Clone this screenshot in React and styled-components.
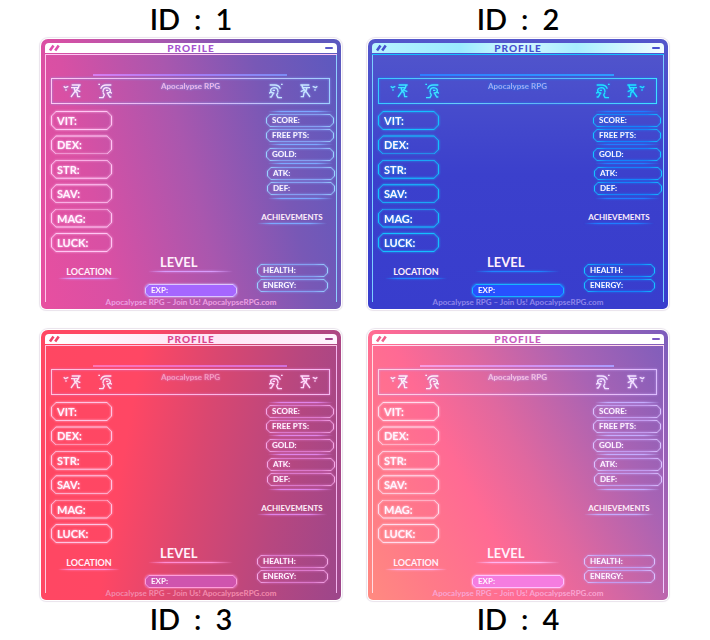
import React from "react";
import styled, { createGlobalStyle, ThemeProvider } from "styled-components";

const Global = createGlobalStyle`
  * { box-sizing: border-box; margin: 0; }
  body { background: #fff; font-family: Lato, "Open Sans", sans-serif; }
`;

const themes = [
  {
    id: 1,
    bg: "linear-gradient(76deg, #e84fa0 0%, #d850a4 22%, #a957ae 50%, #7858b6 75%, #5a59c0 100%)",
    header: "#ffffff",
    title: "#a653cf",
    slash: "#e04fae",
    dash: "#5a59c9",
    frame: "linear-gradient(90deg, #ffc9f2, #e3b4f5 50%, #9fd0ff)",
    sideL: "#ffc4ea",
    sideR: "#8fd0ff",
    accent: "linear-gradient(90deg, #d77df0, #a57bf5 50%, #7c8cf5)",
    stat: "#ffc6f3",
    mini: "#9bd3ff",
    miniDim: "#85a0f2",
    rule: "#d79cfc",
    ruleR: "#7ca8ff",
    exp: "#a566ff",
    expLine: "#dcc6ff",
    iconL: "#ffe3fa",
    iconR: "#c9e6ff",
    soft: "#f0b4e6",
    foot: "#eba0e2",
  },
  {
    id: 2,
    bg: "linear-gradient(180deg, #5356cb 0%, #4a4fcc 18%, #3b40cc 50%, #383dcd 100%)",
    header: "linear-gradient(90deg, #b9f3ff, #9aecff 30%, #d5f8ff 50%, #a8efff 70%, #f2fdff)",
    title: "#4650cf",
    slash: "#4650cf",
    dash: "#4650cf",
    frame: "linear-gradient(90deg, #38c8ff, #6ccbf8 30%, #5fb4f5 60%, #3fe0ff)",
    sideL: "#7ccfff",
    sideR: "#7ccfff",
    accent: "linear-gradient(90deg, #2f7dff, #2f8cff 50%, #2f9cff)",
    stat: "#14bfff",
    mini: "#16c4ff",
    miniDim: "#1483fa",
    rule: "#1f86ff",
    ruleR: "#1f7dff",
    exp: "#2750ff",
    expLine: "#17b4ff",
    iconL: "#3fe4ff",
    iconR: "#22e2ff",
    soft: "#a7a7ee",
    foot: "#8d86ea",
  },
  {
    id: 3,
    bg: "linear-gradient(100deg, #ff4762 0%, #ff4764 30%, #da4770 52%, #b8477f 76%, #9c468b 100%)",
    header: "linear-gradient(90deg, #ffffff, #ffe3f6 50%, #fff4fd)",
    title: "#d8448c",
    slash: "#f04468",
    dash: "#a0428c",
    frame: "linear-gradient(90deg, #ffc3dc, #ffb6e2 50%, #f5b9f0)",
    sideL: "#ffc9dc",
    sideR: "#f3b4ee",
    accent: "linear-gradient(90deg, #ff74b4, #ee6cc8 50%, #d070dc)",
    stat: "#ffc4e2",
    mini: "#f6aae6",
    miniDim: "#dc78cc",
    rule: "#ff8cd4",
    ruleR: "#e084ea",
    exp: "#cf54ae",
    expLine: "#ff9edb",
    iconL: "#ffe3ee",
    iconR: "#ffdcfa",
    soft: "#f59cbc",
    foot: "#f28aac",
  },
  {
    id: 4,
    bg: "linear-gradient(62deg, #ff8a80 0%, #ff7a88 16%, #ff6a94 36%, #e0689f 52%, #a863b4 76%, #7c5dbc 100%)",
    header: "#ffffff",
    title: "#c95cc0",
    slash: "#f0628c",
    dash: "#7b58c4",
    frame: "linear-gradient(90deg, #ffd0e2, #ffc0ec 50%, #dcbcff)",
    sideL: "#ffdce4",
    sideR: "#f0ccff",
    accent: "linear-gradient(90deg, #f99ce0, #d990f0 50%, #a99cff)",
    stat: "#ffdcec",
    mini: "#dcc4ff",
    miniDim: "#c39cf0",
    rule: "#ffb4f0",
    ruleR: "#c4acff",
    exp: "#f57ce0",
    expLine: "#ffc4ff",
    iconL: "#fff0f6",
    iconR: "#f2e2ff",
    soft: "#f5c0de",
    foot: "#f9a4d2",
  },
];

const Page = styled.main`
  display: grid;
  grid-template-columns: 1fr 1fr;
  column-gap: 27px;
  row-gap: 21px;
  padding: 0 42px 0 41px;
`;

const Entry = styled.section`
  display: flex;
  flex-direction: ${(p) => (p.$below ? "column-reverse" : "column")};
`;

const Heading = styled.h2`
  display: flex;
  justify-content: center;
  gap: 14px;
  height: 39px;
  font-size: 29px;
  line-height: 37px;
  font-weight: 600;
  color: #000;
`;

const Window = styled.article`
  display: flex;
  flex-direction: column;
  min-height: 270px;
  padding: 4px 4px 2px;
  border-radius: 7px 7px 5px 5px;
  background: ${(p) => p.theme.bg};
  box-shadow: 0 0 0 1px #ffffff, 0 0 1px 2px #e9e3ec;
`;

const TitleBar = styled.header`
  display: grid;
  grid-template-columns: 1fr auto 1fr;
  align-items: center;
  height: 10px;
  padding: 0 4px;
  border-radius: 4px 4px 0 0;
  background: ${(p) => p.theme.header};
`;

const Title = styled.h3`
  font-size: 10px;
  line-height: 10px;
  font-weight: 900;
  letter-spacing: 1px;
  color: ${(p) => p.theme.title};
`;

const Slashes = styled.svg`
  width: 11px;
  height: 6px;
  overflow: visible;
  stroke: ${(p) => p.theme.slash};
  stroke-width: 2.6;
`;

const Minimize = styled.button`
  justify-self: end;
  display: flex;
  align-items: center;
  width: 8px;
  height: 10px;
  padding: 0;
  border: 0;
  background: none;
  &::before {
    content: "";
    flex: 1;
    height: 2px;
    border-radius: 1px;
    background: ${(p) => p.theme.dash};
  }
`;

const Body = styled.div`
  flex: 1;
  display: flex;
  flex-direction: column;
  margin-top: 1px;
  padding: 0 2px 0 5px;
  border-top: 1px solid ${(p) => p.theme.stat};
  background:
    linear-gradient(${(p) => p.theme.sideL}, ${(p) => p.theme.sideL}) left top / 1px calc(100% - 5px) no-repeat,
    linear-gradient(${(p) => p.theme.sideR}, ${(p) => p.theme.sideR}) right top / 1px calc(100% - 5px) no-repeat;
`;

const Accent = styled.hr`
  width: 68%;
  height: 2px;
  margin: 19px 0 2px 15%;
  border: 0;
  background: ${(p) => p.theme.accent};
`;

const Banner = styled.div`
  display: grid;
  grid-template-columns: 1fr auto 1fr;
  height: 26px;
  margin: 0 5px 0 1px;
  padding: 0 11px;
  border: 1px solid;
  border-image: ${(p) => p.theme.frame} 1;
  filter: drop-shadow(0 0 1px ${(p) => p.theme.miniDim});
`;

const BannerText = styled.p`
  font-size: 8px;
  line-height: 14px;
  font-weight: 700;
  color: ${(p) => p.theme.soft};
`;

const Figures = styled.div`
  display: flex;
  align-items: center;
  gap: 17px;
  justify-content: ${(p) => (p.$mirror ? "flex-end" : "flex-start")};
  color: ${(p) => (p.$mirror ? p.theme.iconR : p.theme.iconL)};
`;

const Glyph = styled.svg`
  width: ${(p) => p.$width}px;
  height: 16px;
  fill: none;
  stroke: currentColor;
  stroke-width: 4;
  stroke-linejoin: round;
`;

const Columns = styled.div`
  flex: 1;
  display: grid;
  grid-template-columns: 70px 1fr 78px;
  column-gap: 20px;
`;

const LeftColumn = styled.div`
  display: flex;
  flex-direction: column;
  padding: 7px 0 0 1px;
`;

const Stats = styled.ul`
  display: flex;
  flex-direction: column;
  justify-content: space-between;
  height: 141px;
  padding: 0;
  list-style: none;
`;

const octagon = (cut) => `polygon(evenodd,
  ${cut}px 0, calc(100% - ${cut}px) 0, 100% ${cut}px, 100% calc(100% - ${cut}px),
  calc(100% - ${cut}px) 100%, ${cut}px 100%, 0 calc(100% - ${cut}px), 0 ${cut}px, ${cut}px 0,
  ${cut}px 1px, 1px ${cut}px, 1px calc(100% - ${cut}px), ${cut}px calc(100% - 1px),
  calc(100% - ${cut}px) calc(100% - 1px), calc(100% - 1px) calc(100% - ${cut}px),
  calc(100% - 1px) ${cut}px, calc(100% - ${cut}px) 1px, ${cut}px 1px)`;

const Plate = styled.li`
  position: relative;
  display: block;
  color: #fff4fd;
  font-weight: 700;
  filter: drop-shadow(0 0 1px ${(p) => p.$glow});
  &::before {
    content: "";
    position: absolute;
    inset: 0;
    background: ${(p) => p.$line};
    clip-path: ${(p) => octagon(p.$cut)};
  }
`;

const StatPlate = styled(Plate).attrs((p) => ({ $line: p.theme.stat, $glow: p.theme.stat, $cut: 5 }))`
  width: 61px;
  height: 19px;
  padding-left: 6px;
  font-size: 11px;
  line-height: 19px;
`;

const SmallPlate = styled(Plate).attrs((p) => ({
  $line: `linear-gradient(90deg, ${p.theme.mini}, ${p.theme.miniDim} 20%, ${p.theme.miniDim} 80%, ${p.theme.mini})`,
  $glow: p.theme.miniDim,
  $cut: 4,
}))`
  height: 13px;
  padding-left: 6px;
  font-size: 8px;
  line-height: 13px;
`;

const ExpPlate = styled(Plate).attrs((p) => ({ as: "div", $line: p.theme.expLine, $glow: p.theme.expLine, $cut: 4 }))`
  width: 92px;
  height: 13px;
  padding-left: 6px;
  font-size: 8px;
  line-height: 13px;
  border-radius: 5px;
  background: ${(p) => p.theme.exp};
`;

const Rule = styled.hr`
  align-self: stretch;
  height: 1px;
  border: 0;
  background: linear-gradient(90deg, transparent, ${(p) => p.$color} 20%, ${(p) => p.$color} 75%, transparent);
  filter: drop-shadow(0 0 1px ${(p) => p.$color});
`;

const Caption = styled.h4`
  display: flex;
  flex-direction: column;
  align-items: center;
  font-size: 9px;
  line-height: 12px;
  font-weight: 700;
  color: #fff0fb;
`;

const Location = styled(Caption)`
  width: 62px;
  margin: 14px 0 0 7px;
`;

const MiddleColumn = styled.div`
  display: flex;
  flex-direction: column;
  justify-content: flex-end;
  align-items: flex-end;
  gap: 12px;
`;

const Level = styled(Caption)`
  width: 85px;
  margin-right: 4px;
  font-size: 13px;
  line-height: 18px;
`;

const LevelText = styled.span`
  align-self: flex-start;
  padding-left: 12px;
`;

const RightColumn = styled.div`
  display: flex;
  flex-direction: column;
  padding-top: 7px;
`;

const PlateGroup = styled.ul`
  display: flex;
  flex-direction: column;
  gap: 2px;
  padding: 0;
  margin: ${(p) => p.$margin};
  list-style: none;
`;

const GroupRule = styled(Rule)`
  margin: 0 2px 0 11px;
`;

const Achievements = styled(Caption)`
  width: 70px;
  margin-top: 12px;
  font-size: 8px;
`;

const Footer = styled.footer`
  height: 10px;
  padding-right: 3px;
  text-align: center;
  font-size: 8px;
  line-height: 10px;
  font-weight: 700;
  color: ${(p) => p.theme.foot};
`;

const SiteLink = styled.a`
  color: inherit;
  text-decoration: none;
`;

function Runner({ mirror }) {
  return (
    <Glyph $width={18} viewBox="0 0 54 48" aria-hidden="true">
      <g transform={mirror ? "matrix(-1 0 0 1 54 0)" : undefined}>
        <path d="M2 10 L7 14 L16 10 M7 21 H11" />
        <path d="M26 6 H53 M24 14 H48 M48 8 Q47 18 36 25 L24 42 M34 15 Q33 23 42 29 L44 41 H52 M43 22 L52 26" />
      </g>
    </Glyph>
  );
}

function Thrower({ mirror }) {
  return (
    <Glyph $width={14} viewBox="0 0 42 48" aria-hidden="true">
      <g transform={mirror ? "matrix(-1 0 0 1 42 0)" : undefined}>
        <path d="M1 4 H6 M8 17 Q13 6 24 6 H40 M15 27 Q15 14 26 14 Q38 15 37 24 Q35 31 26 30 M24 22 H31 M15 28 L19 36 L15 44 H3 M29 31 L35 42 H40 M36 27 L42 31" />
      </g>
    </Glyph>
  );
}

function Profile({ theme }) {
  return (
    <ThemeProvider theme={theme}>
      <Window>
        <TitleBar>
          <Slashes viewBox="0 0 11 6" aria-hidden="true">
            <path d="M1 5.5 L4.5 .5 M6.2 5.5 L9.7 .5" />
          </Slashes>
          <Title>PROFILE</Title>
          <Minimize aria-label="Minimize" />
        </TitleBar>
        <Body>
          <Accent />
          <Banner>
            <Figures>
              <Runner />
              <Thrower />
            </Figures>
            <BannerText>Apocalypse RPG</BannerText>
            <Figures $mirror>
              <Thrower mirror />
              <Runner mirror />
            </Figures>
          </Banner>
          <Columns>
            <LeftColumn>
              <Stats>
                {["VIT:", "DEX:", "STR:", "SAV:", "MAG:", "LUCK:"].map((s) => (
                  <StatPlate key={s}>{s}</StatPlate>
                ))}
              </Stats>
              <Location>
                LOCATION
                <Rule $color={theme.rule} />
              </Location>
            </LeftColumn>
            <MiddleColumn>
              <Level>
                <LevelText>LEVEL</LevelText>
                <Rule $color={theme.rule} />
              </Level>
              <ExpPlate>EXP:</ExpPlate>
            </MiddleColumn>
            <RightColumn>
              <GroupRule $color={theme.ruleR} />
              <PlateGroup $margin="2px 1px 2px 9px">
                <SmallPlate>SCORE:</SmallPlate>
                <SmallPlate>FREE PTS:</SmallPlate>
              </PlateGroup>
              <GroupRule $color={theme.ruleR} />
              <PlateGroup $margin="3px 1px 2px 9px">
                <SmallPlate>GOLD:</SmallPlate>
              </PlateGroup>
              <GroupRule $color={theme.ruleR} />
              <PlateGroup $margin="3px 0 3px 10px">
                <SmallPlate>ATK:</SmallPlate>
                <SmallPlate>DEF:</SmallPlate>
              </PlateGroup>
              <GroupRule $color={theme.ruleR} />
              <Achievements>
                ACHIEVEMENTS
                <Rule $color={theme.ruleR} />
              </Achievements>
              <PlateGroup $margin="40px 7px 0 0">
                <SmallPlate>HEALTH:</SmallPlate>
                <SmallPlate>ENERGY:</SmallPlate>
              </PlateGroup>
            </RightColumn>
          </Columns>
          <Footer>
            Apocalypse RPG – Join Us! <SiteLink href="#join">ApocalypseRPG.com</SiteLink>
          </Footer>
        </Body>
      </Window>
    </ThemeProvider>
  );
}

export default function App() {
  return (
    <>
      <Global />
      <Page>
        {themes.map((t) => (
          <Entry key={t.id} $below={t.id > 2}>
            <Heading>
              <span>ID</span>
              <span>:</span>
              <span>{t.id}</span>
            </Heading>
            <Profile theme={t} />
          </Entry>
        ))}
      </Page>
    </>
  );
}
